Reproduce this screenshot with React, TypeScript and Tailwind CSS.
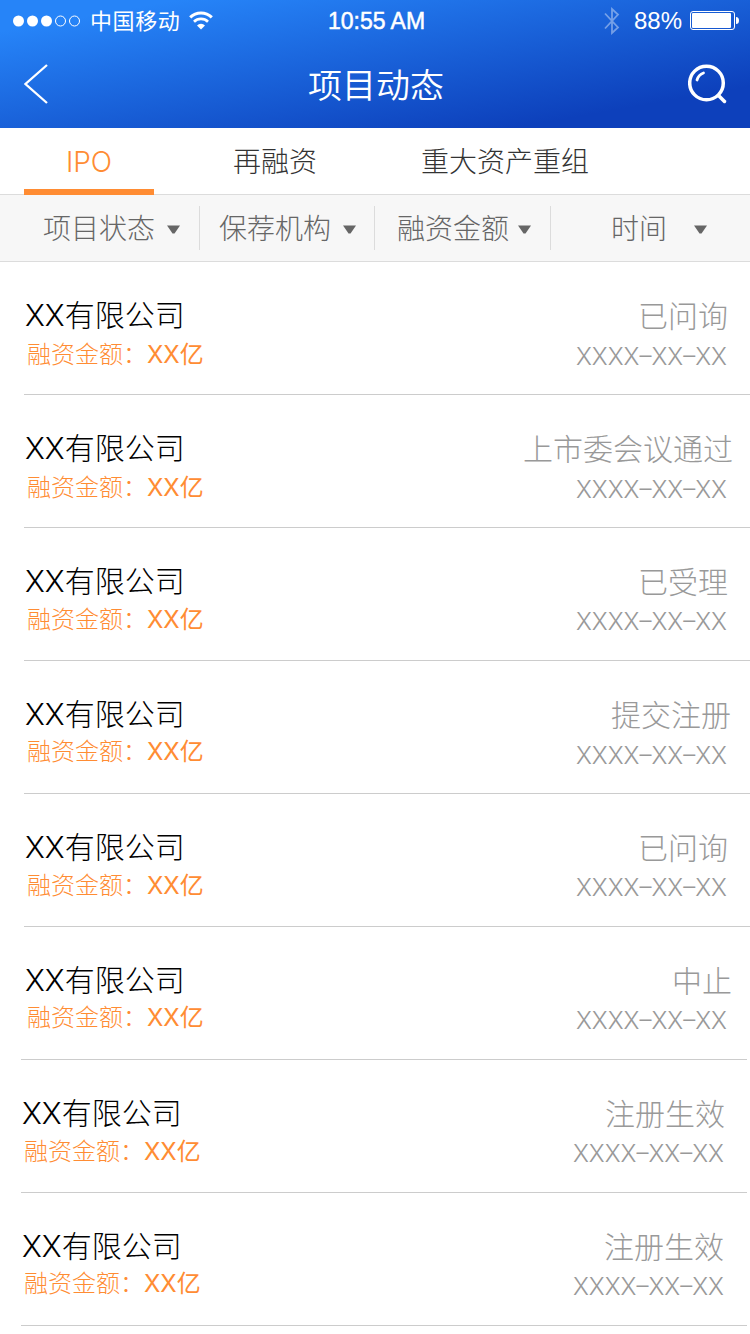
const FONT = "font-['Inter','Noto_Sans_CJK_SC',sans-serif]";

interface IProject {
  status: string;
  statusClass: string;
  amountClass: string;
  dateClass: string;
  rowClass: string;
  dividerClass: string;
}

const tabs = [
  { label: "IPO", className: "w-[130px]", active: true },
  { label: "再融资", className: "w-[242px]", active: false },
  { label: "重大资产重组", className: "w-[218px]", active: false },
];

const filters = [
  { label: "项目状态", className: "w-[200px] pl-[43px] gap-[12px]" },
  { label: "保荐机构", className: "w-[175px] pl-[19px] gap-[12px]" },
  { label: "融资金额", className: "w-[176px] pl-[22px] gap-[9px]" },
  { label: "时间", className: "w-[199px] pl-[60px] gap-[27px]" },
];

const projects: IProject[] = [
  { status: "已问询", statusClass: "mr-[22px]", amountClass: "mt-[5px]", dateClass: "mt-[6px]", rowClass: "ml-6", dividerClass: "ml-6" },
  { status: "上市委会议通过", statusClass: "mr-[17px]", amountClass: "mt-[5px]", dateClass: "mt-[6px]", rowClass: "ml-6", dividerClass: "ml-6" },
  { status: "已受理", statusClass: "mr-[22px]", amountClass: "mt-[4px]", dateClass: "mt-[5px]", rowClass: "ml-6", dividerClass: "ml-6" },
  { status: "提交注册", statusClass: "mr-[19px]", amountClass: "mt-[3px]", dateClass: "mt-[6px]", rowClass: "ml-6", dividerClass: "ml-6" },
  { status: "已问询", statusClass: "mr-[22px]", amountClass: "mt-[4px]", dateClass: "mt-[5px]", rowClass: "ml-6", dividerClass: "ml-6" },
  { status: "中止", statusClass: "mr-[18px]", amountClass: "mt-[3px]", dateClass: "mt-[5px]", rowClass: "ml-6", dividerClass: "ml-[21px] mr-[3px]" },
  { status: "注册生效", statusClass: "mr-[22px]", amountClass: "mt-[4px]", dateClass: "mt-[5px]", rowClass: "ml-[21px] mr-[3px]", dividerClass: "ml-[21px] mr-[3px]" },
  { status: "注册生效", statusClass: "mr-[23px]", amountClass: "mt-[3px]", dateClass: "mt-[5px]", rowClass: "ml-[21px] mr-[3px]", dividerClass: "ml-[21px] mr-[3px]" },
];

const StatusBar = () => {
  return (
    <div className="flex h-10 items-center pl-[13px] pr-[10px] text-white">
      <div className="flex flex-1 items-center">
        <svg width="68" height="12" viewBox="0 0 68 12" className="mt-px">
          <circle cx="5.5" cy="6" r="5.5" fill="#fff" />
          <circle cx="19.5" cy="6" r="5.5" fill="#fff" />
          <circle cx="33.5" cy="6" r="5.5" fill="#fff" />
          <circle cx="47.5" cy="6" r="5" fill="none" stroke="#fff" />
          <circle cx="61.5" cy="6" r="5" fill="none" stroke="#fff" />
        </svg>
        <span className="ml-[9px] mt-[2px] text-[22px] leading-[30px] tracking-[0.6px]">中国移动</span>
        <svg width="24" height="19" viewBox="0 0 24 19" className="ml-[9px]" fill="none" stroke="#fff">
          <path d="M1.2 6.4a15.2 15.2 0 0 1 21.6 0" strokeWidth="3" />
          <path d="M5 10.7a10 10 0 0 1 14 0" strokeWidth="2.7" />
          <path d="M12 18.5l-4-4a5.6 5.6 0 0 1 8 0z" fill="#fff" stroke="none" />
        </svg>
      </div>
      <span className="mt-[2px] font-['Liberation_Sans',sans-serif] text-[23px] leading-[30px] [-webkit-text-stroke:0.5px_white]">
        10:55 AM
      </span>
      <div className="flex flex-1 items-center justify-end">
        <svg width="16" height="28" viewBox="0 0 16 28" className="mt-px opacity-40" fill="none" stroke="#fff" strokeWidth="1.8">
          <path d="M1 6.5L14 20.5L8 26V2L14 7.5L1 21.5" />
        </svg>
        <span className="ml-[14px] mt-[2px] font-['Liberation_Sans',sans-serif] text-[24px] leading-[30px]">88%</span>
        <svg width="50" height="20" viewBox="0 0 50 20" className="ml-[8px]">
          <rect x="0.5" y="1.5" width="44" height="18" rx="2.5" fill="none" stroke="#fff" />
          <rect x="2" y="3" width="39" height="15" rx="1" fill="#fff" />
          <path d="M46 7a3 3.5 0 0 1 0 7z" fill="#fff" />
        </svg>
      </div>
    </div>
  );
};

const Header = () => {
  return (
    <header className="h-32 bg-[linear-gradient(170deg,#2684f8_12%,#0d40bb_84%)]">
      <StatusBar />
      <div className="flex h-[88px] items-center justify-between pl-6 pr-[22px]">
        <svg width="40" height="40" viewBox="0 0 40 40" fill="none" stroke="#fff" strokeWidth="2.3">
          <path d="M23 1L1.5 20L23 39" />
        </svg>
        <h1 className="mt-[3px] text-[34px] leading-[44px] font-[350] text-white">项目动态</h1>
        <svg width="40" height="40" viewBox="0 0 40 40" fill="none" stroke="#fff" strokeLinecap="round">
          <circle cx="18.5" cy="19" r="16.8" strokeWidth="3.5" />
          <path d="M30.5 31.5L36.5 37.5" strokeWidth="3.5" />
          <path d="M9 16C10 12.5 12.5 10 15.500 9" strokeWidth="2.8" />
        </svg>
      </div>
    </header>
  );
};

const Tabs = () => {
  return (
    <nav className="flex h-[67px] border-b border-[#dcdcdc] bg-white pl-6">
      {tabs.map((tab) => (
        <div
          key={tab.label}
          className={`${tab.className} ${
            tab.active ? "relative text-[#ff8c33]" : "text-[#333]"
          } flex justify-center pt-[14px] text-[28px] leading-[40px] font-light`}
        >
          {tab.label}
          {tab.active && <div className="absolute inset-x-0 top-[61px] h-[6px] bg-[#ff8c33]" />}
        </div>
      ))}
    </nav>
  );
};

const Filters = () => {
  return (
    <div className="flex h-[67px] items-center border-b border-[#dcdcdc] bg-[#f7f7f7]">
      {filters.map((filter) => (
        <div
          key={filter.label}
          className={`${filter.className} flex h-11 items-center border-r border-[#dcdcdc] text-[28px] text-[#666] font-light last:border-r-0`}
        >
          <span className="mt-[2px] leading-[40px]">{filter.label}</span>
          <svg width="13" height="9" viewBox="0 0 13 9" className="mt-[2px]">
            <path d="M0 0.500H13L7.500 8.500H5.500z" fill="#666" />
          </svg>
        </div>
      ))}
    </div>
  );
};

const ProjectRow = ({ project }: { project: IProject }) => {
  return (
    <li>
      <div className={`${project.rowClass} flex h-[132px] justify-between pt-[33px] font-light`}>
        <div>
          <div className="pl-[1px] text-[30px] leading-[40px] text-black">
            <span>XX</span>有限公司
          </div>
          <div className={`${project.amountClass} flex pl-[3px] text-[24px] leading-[30px] text-[#ff8c33]`}>
            <span>融资金额：</span>
            <span className="font-normal">XX亿</span>
          </div>
        </div>
        <div className="flex flex-col items-end text-[#999]">
          <div className={`${project.statusClass} pt-px text-[30px] leading-[40px]`}>{project.status}</div>
          <div className={`${project.dateClass} mr-[23px] text-[24px] leading-[30px]`}>XXXX–XX–XX</div>
        </div>
      </div>
      <div className={`${project.dividerClass} h-px bg-[#ccc]`} />
    </li>
  );
};

const App = () => {
  return (
    <div className={`${FONT} h-[1334px] w-[750px] overflow-hidden bg-white`}>
      <Header />
      <Tabs />
      <Filters />
      <ul>
        {projects.map((project, index) => (
          <ProjectRow key={index} project={project} />
        ))}
      </ul>
    </div>
  );
};

export default App;
